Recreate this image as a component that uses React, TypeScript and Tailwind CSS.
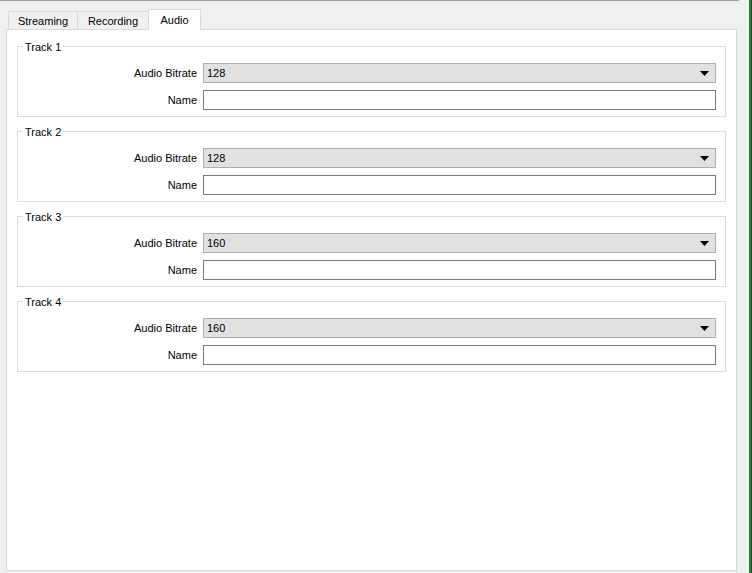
import { useState } from "react";

type Track = { id: number; bitrate: string };

const tracks: Track[] = [
  { id: 1, bitrate: "128" },
  { id: 2, bitrate: "128" },
  { id: 3, bitrate: "160" },
  { id: 4, bitrate: "160" },
];

const tabs = [
  { label: "Streaming", width: "w-[70px]" },
  { label: "Recording", width: "w-[72px]" },
  { label: "Audio", width: "w-[53px]" },
];

function TrackGroup({ track }: { track: Track }) {
  return (
    <fieldset className="m-0 h-[77px] border border-[#dcdcdc] px-0 pb-0 pt-0">
      <legend className="ml-[5px] px-[2px] pt-px text-[11px] leading-[12px] text-black">Track {track.id}</legend>
      <div className="flex flex-col gap-[7px] pr-[9px] pt-[10px]">
        <div className="flex items-center">
          <span className="w-[185px] pr-[6px] text-right text-[11px] text-black">Audio Bitrate</span>
          <div className="flex h-[20px] flex-1 items-center justify-between border border-[#adadad] bg-[#e1e1e1] pl-[3px] pr-[6px] text-[11px] text-black">
            <span>{track.bitrate}</span>
            <svg width="9" height="5" viewBox="0 0 9 5">
              <path d="M0 0h9L4.5 5z" fill="#000" />
            </svg>
          </div>
        </div>
        <div className="flex items-center">
          <span className="w-[185px] pr-[6px] text-right text-[11px] text-black">Name</span>
          <input className="h-[20px] flex-1 border border-[#7a7a7a] bg-white px-[3px] text-[11px] outline-none" />
        </div>
      </div>
    </fieldset>
  );
}

export default function App() {
  const [active, setActive] = useState("Audio");

  return (
    <div
      className="relative flex h-[573px] w-[752px] flex-col overflow-hidden bg-[#f0f0f0]"
      style={{ fontFamily: '"Liberation Sans", Arial, sans-serif' }}
    >
      <div className="h-px w-[739px] bg-[#a0a0a0]" />
      <div className="flex h-[28px] items-end pl-[8px]">
        {tabs.map((tab, i) => {
          const selected = tab.label === active;
          return (
            <button
              key={tab.label}
              type="button"
              onClick={() => setActive(tab.label)}
              className={`${tab.width} ${i > 0 ? "-ml-px" : ""} ${
                selected
                  ? "relative z-10 mb-[-1px] flex h-[21px] items-center justify-center border border-b-0 border-[#d9d9d9] bg-white text-[11px] text-black"
                  : "flex h-[18px] items-center justify-center border border-b-0 border-[#d9d9d9] bg-[#f0f0f0] pt-[2px] text-[11px] text-black"
              }`}
            >
              {tab.label}
            </button>
          );
        })}
      </div>
      <div className="ml-[6px] flex h-[542px] w-[731px] flex-col gap-[8px] border border-[#d9d9d9] bg-white pl-[10px] pr-[10px] pt-[10px]">
        {tracks.map((track) => (
          <TrackGroup key={track.id} track={track} />
        ))}
      </div>
      <div className="absolute right-px top-0 h-full w-[2px] bg-[#1e8c1e]" />
      <div className="absolute right-0 top-0 h-full w-px bg-[#3a3a3a]" />
    </div>
  );
}
